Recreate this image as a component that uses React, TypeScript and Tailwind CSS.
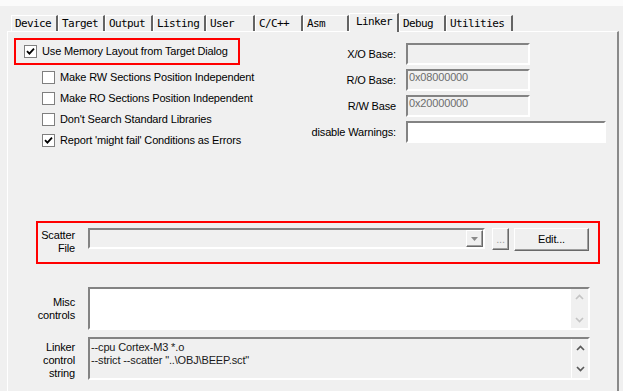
import React from "react";

const tabs = [
  { label: "Device", w: "w-[47px]" },
  { label: "Target", w: "w-[47px]" },
  { label: "Output", w: "w-[48px]" },
  { label: "Listing", w: "w-[53px]" },
  { label: "User", w: "w-[49px]" },
  { label: "C/C++", w: "w-[48px]" },
  { label: "Asm", w: "w-[46px]" },
  { label: "Linker", w: "w-[50px]", active: true },
  { label: "Debug", w: "w-[47px]" },
  { label: "Utilities", w: "w-[67px]" },
];

const options = [
  { label: "Make RW Sections Position Independent", checked: false },
  { label: "Make RO Sections Position Independent", checked: false },
  { label: "Don't Search Standard Libraries", checked: false },
  { label: "Report 'might fail' Conditions as Errors", checked: true },
];

function Checkbox({ checked }: { checked: boolean }) {
  return (
    <span className="flex h-[13px] w-[13px] shrink-0 items-center justify-center border border-[#7f7f7f] bg-white">
      {checked && (
        <svg width="9" height="9" viewBox="0 0 9 9">
          <polyline points="1,4.2 3.4,6.6 8,1.6" fill="none" stroke="#000" strokeWidth="1.8" />
        </svg>
      )}
    </span>
  );
}

function Chevron({ up, color }: { up: boolean; color: string }) {
  return (
    <svg width="9" height="6" viewBox="0 0 9 6">
      <polyline
        points={up ? "1,5 4.5,1.5 8,5" : "1,1 4.5,4.5 8,1"}
        fill="none"
        stroke={color}
        strokeWidth="1.7"
      />
    </svg>
  );
}

const sunken = "border-2 border-t-[#838383] border-l-[#838383] border-b-white border-r-white";
const raised = "border border-t-white border-l-white border-b-[#696969] border-r-[#696969] shadow-[inset_-1px_-1px_0_#a0a0a0]";

function Field({ label, value, wide }: { label: string; value?: string; wide?: boolean }) {
  return (
    <div className="flex items-center">
      <span className="w-[96px] text-right">{label}</span>
      <div
        className={`ml-[10px] h-[22px] ${wide ? "w-[200px] bg-white" : "w-[124px] bg-[#f0f0f0]"} ${sunken} pl-[1px] leading-[13px] text-[#6d6d6d]`}
      >
        {value}
      </div>
    </div>
  );
}

export default function App() {
  return (
    <div
      className="h-[391px] w-[623px] overflow-hidden bg-[#f0f0f0] text-[11px] tracking-[-0.15px] text-black"
      style={{ fontFamily: '"Liberation Sans", Arial, sans-serif' }}
    >
      <div className="h-[6px] bg-[#fbfbfb]" />

      <div
        className="mt-[7px] flex h-[18px] items-end pl-[11px] text-[11px] tracking-[-0.6px]"
        style={{ fontFamily: '"DejaVu Sans Mono", "Liberation Mono", monospace' }}
      >
        {tabs.map((t) =>
          t.active ? (
            <div
              key={t.label}
              className={`${t.w} relative z-10 -mb-[1px] h-[19px] border-l border-t border-r-2 border-l-white border-t-white border-r-[#646464] bg-[#f0f0f0] pl-[6px] pt-[1px] leading-[13px]`}
            >
              {t.label}
            </div>
          ) : (
            <div
              key={t.label}
              className={`${t.w} h-[16px] border-l border-t border-r-2 border-l-white border-t-white border-r-[#646464] bg-[#f0f0f0] pl-[3px] pt-[2px] leading-[12px]`}
            >
              {t.label}
            </div>
          )
        )}
      </div>

      <div className="ml-[7px] h-[400px] w-[612px] border-l border-t border-r-2 border-l-white border-t-white border-r-[#8a8a8a]">
        <div className="flex items-start">
          <div className="ml-[6px] w-[226px]">
            <div className="mt-[6px] flex h-[27px] items-center gap-[5px] border-2 border-[#ff0000] pl-[8px]">
              <Checkbox checked />
              <span>Use Memory Layout from Target Dialog</span>
            </div>
            <div className="mt-[2px]">
              {options.map((o) => (
                <div key={o.label} className="flex h-[21px] items-center gap-[5px] pl-[28px] whitespace-nowrap">
                  <Checkbox checked={o.checked} />
                  <span>{o.label}</span>
                </div>
              ))}
            </div>
          </div>

          <div className="ml-[60px] mt-[11px] flex flex-col gap-[4px]">
            <Field label="X/O Base:" />
            <Field label="R/O Base:" value="0x08000000" />
            <Field label="R/W Base" value="0x20000000" />
            <Field label="disable Warnings:" wide />
          </div>
        </div>

        <div className="ml-[28px] mt-[70px] flex h-[43px] w-[564px] items-start border-2 border-[#ff0000] pt-[5px]">
          <div className="w-[37px] pt-[1px] text-right leading-[13px]">
            Scatter
            <br />
            File
          </div>
          <div className={`ml-[13px] flex h-[21px] w-[397px] justify-end bg-[#f0f0f0] ${sunken}`}>
            <div className={`flex h-full w-[17px] items-center justify-center bg-[#f0f0f0] ${raised}`}>
              <svg width="7" height="4" viewBox="0 0 7 4">
                <polygon points="0,0 7,0 3.5,4" fill="#8a8a8a" />
              </svg>
            </div>
          </div>
          <div className={`ml-[7px] flex h-[22px] w-[17px] items-center justify-center text-[#a0a0a0] ${raised}`}>
            ...
          </div>
          <div className={`ml-[5px] flex h-[23px] w-[75px] items-center justify-center ${raised}`}>Edit...</div>
        </div>

        <div className="mt-[23px] flex items-start">
          <div className="w-[67px] pt-[9px] text-right leading-[13px]">
            Misc
            <br />
            controls
          </div>
          <div className={`ml-[13px] flex h-[43px] w-[502px] bg-white ${sunken}`}>
            <div className="flex-1" />
            <div className="flex w-[17px] flex-col items-center justify-between bg-[#f0f0f0] py-[5px]">
              <Chevron up color="#c4c4c4" />
              <Chevron up={false} color="#c4c4c4" />
            </div>
          </div>
        </div>

        <div className="mt-[7px] flex items-start">
          <div className="w-[67px] pt-[4px] text-right leading-[13px]">
            Linker
            <br />
            control
            <br />
            string
          </div>
          <div className={`ml-[13px] flex h-[43px] w-[502px] bg-[#f0f0f0] ${sunken}`}>
            <div className="flex-1 pl-[1px] pt-[2px] leading-[13px] text-[#1a1a1a]">
              --cpu Cortex-M3 *.o
              <br />
              --strict --scatter "..\OBJ\BEEP.sct"
            </div>
            <div className="flex w-[17px] flex-col items-center justify-between border-l border-l-white py-[6px]">
              <Chevron up color="#5a5a5a" />
              <Chevron up={false} color="#5a5a5a" />
            </div>
          </div>
        </div>
      </div>
    </div>
  );
}
